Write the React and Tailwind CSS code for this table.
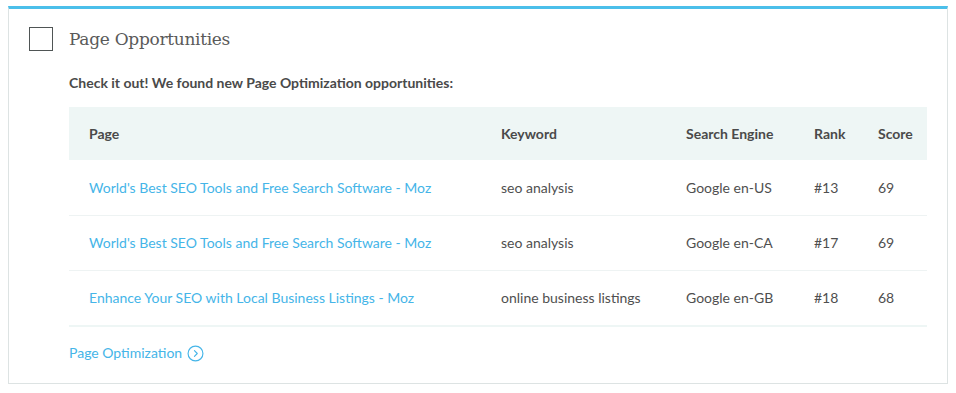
import React from 'react';

const rows = [
  { page: "World's Best SEO Tools and Free Search Software - Moz", keyword: 'seo analysis', engine: 'Google en-US', rank: '#13', score: 69 },
  { page: "World's Best SEO Tools and Free Search Software - Moz", keyword: 'seo analysis', engine: 'Google en-CA', rank: '#17', score: 69 },
  { page: 'Enhance Your SEO with Local Business Listings - Moz', keyword: 'online business listings', engine: 'Google en-GB', rank: '#18', score: 68 },
];

const grid = 'grid grid-cols-[412px_185px_128px_64px_1fr] items-center pl-5';

export default function App() {
  return (
    <div className="bg-white pt-[6px] pl-2 w-[956px] h-[393px] font-['Lato','Noto_Sans',sans-serif] text-[14px] text-[#4f4f4f]">
      <div className="w-[940px] border border-[#dde3e3] border-t-[3px] border-t-[#4bbfea] pt-[18px] pl-5 pr-5 pb-5">
        {/* Header */}
        <div className="flex items-center gap-4">
          <div className="w-6 h-6 border-[1.5px] border-[#4f5555]" />
          <h2 className="font-['DejaVu_Serif',serif] text-[17px] tracking-[-0.3px] text-[#5a5a5a] leading-6">
            Page Opportunities
          </h2>
        </div>

        <div className="ml-10 mt-[22px]">
          <p className="font-bold leading-5 text-[#4a4a4a]">
            Check it out! We found new Page Optimization opportunities:
          </p>

          {/* Table */}
          <div className="mt-[14px] w-[858px] border-b-2 border-[#eef6f5]">
            <div className={`${grid} h-[53px] bg-[#eef6f5] font-bold text-[#4a4a4a]`}>
              <span>Page</span>
              <span>Keyword</span>
              <span>Search Engine</span>
              <span>Rank</span>
              <span>Score</span>
            </div>
            {rows.map((r, i) => (
              <div
                key={i}
                className={`${grid} h-[55px] pb-px ${i > 0 ? 'border-t border-[#eef3f3]' : ''}`}
              >
                <a className="text-[#45b5e8]">{r.page}</a>
                <span>{r.keyword}</span>
                <span>{r.engine}</span>
                <span>{r.rank}</span>
                <span>{r.score}</span>
              </div>
            ))}
          </div>

          {/* Footer link */}
          <a className="mt-4 flex items-center gap-[5px] leading-5 text-[#45b5e8]">
            Page Optimization
            <svg width="17" height="17" viewBox="0 0 24 24" fill="none" stroke="currentColor" strokeWidth="1.6" strokeLinecap="round" strokeLinejoin="round">
              <circle cx="12" cy="12" r="10.5" />
              <path d="M10.5 8l4 4-4 4" />
            </svg>
          </a>
        </div>
      </div>
    </div>
  );
}
